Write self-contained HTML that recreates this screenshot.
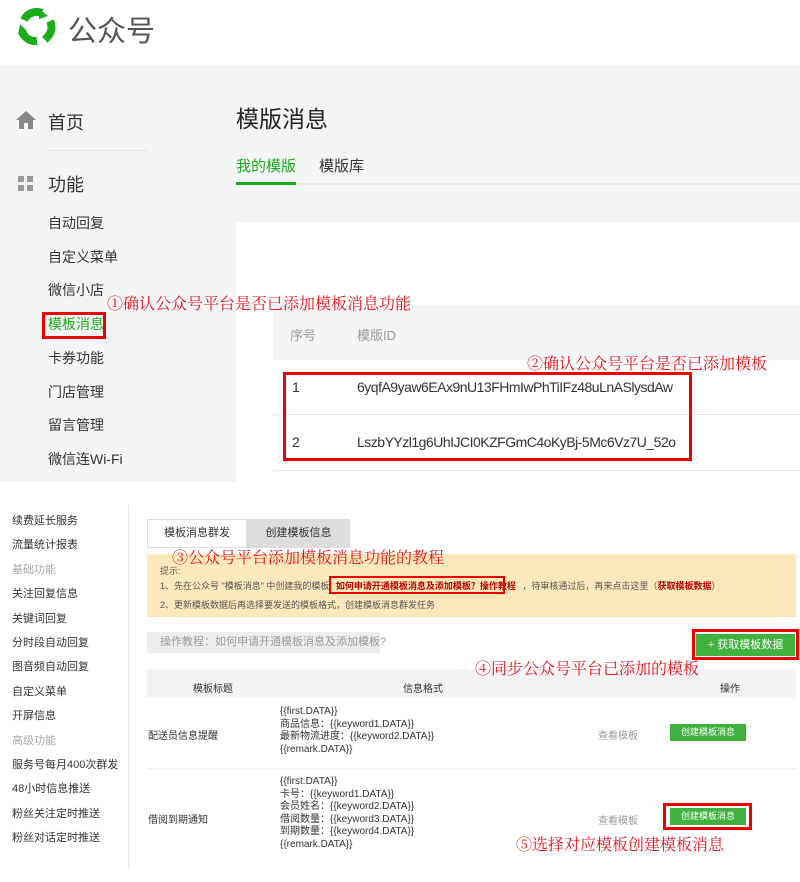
<!DOCTYPE html>
<html><head><meta charset="utf-8"><style>
*{margin:0;padding:0;box-sizing:border-box}
body{width:800px;height:882px;position:relative;overflow:hidden;background:#fff;font-family:"Liberation Sans","Noto Sans CJK SC",sans-serif;color:#333}
.a{position:absolute;white-space:nowrap}
.red{color:#e8141b;font-family:"Noto Serif CJK SC","Liberation Serif",serif;z-index:5}
.box{position:absolute;border:3px solid #e00;z-index:4}
.s{font-size:11px;color:#333}
</style></head><body>
<div class="a" style="left:0;top:0;width:800px;height:65px;background:#fff"></div>
<svg class="a" style="left:15px;top:7px" width="42" height="40" viewBox="0 0 42 40">
<g fill="none" stroke="#1aad19" stroke-width="8" stroke-linecap="butt">
<path d="M9 13 A14 14 0 0 1 27 6"/>
<path d="M35 14 A14 14 0 0 1 30 32"/>
<path d="M22 34 A14 14 0 0 1 7 24"/>
</g>
<path d="M24 2 L33 9 L24 12Z M37 24 L33 36 L27 30Z M3 28 L5 17 L12 24Z" fill="#1aad19"/>
</svg>
<div class="a" style="left:68px;top:8px;font-size:29px;color:#555">公众号</div>
<div class="a" style="left:0;top:65px;width:800px;height:417px;background:#f4f5f7"></div>
<svg class="a" style="left:16px;top:111px" width="20" height="18" viewBox="0 0 20 18"><path d="M10 0 L20 9 H17 V18 H12 V12 H8 V18 H3 V9 H0Z" fill="#888"/></svg>
<div class="a" style="left:48px;top:109px;font-size:18px">首页</div>
<div class="a" style="left:48px;top:150px;width:100px;height:1px;background:#e2e3e5"></div>
<div class="a" style="left:18px;top:176px;width:6px;height:6px;background:#999"></div>
<div class="a" style="left:27px;top:176px;width:6px;height:6px;background:#999"></div>
<div class="a" style="left:18px;top:185px;width:6px;height:6px;background:#999"></div>
<div class="a" style="left:27px;top:185px;width:6px;height:6px;background:#999"></div>
<div class="a" style="left:48px;top:171px;font-size:18px">功能</div>
<div class="a" style="left:48px;top:207px;font-size:14px;line-height:33.7px">自动回复<br>自定义菜单<br>微信小店<br><span style="color:#1aad19">模板消息</span><br>卡券功能<br>门店管理<br>留言管理<br>微信连Wi-Fi</div>
<div class="box" style="left:42px;top:312px;width:64px;height:27px"></div>
<div class="a" style="left:236px;top:100px;font-size:23px;color:#222">模版消息</div>
<div class="a" style="left:236px;top:155px;font-size:15px;color:#1aad19">我的模版</div>
<div class="a" style="left:319px;top:155px;font-size:15px">模版库</div>
<div class="a" style="left:236px;top:183px;width:564px;height:2px;background:#e7e7eb"></div>
<div class="a" style="left:236px;top:182px;width:60px;height:3px;background:#1aad19"></div>
<div class="a" style="left:236px;top:222px;width:564px;height:260px;background:#fff"></div>
<div class="a" style="left:273px;top:305px;width:527px;height:55px;background:#f4f5f7"></div>
<div class="a" style="left:290px;top:325px;font-size:13px;color:#999">序号</div>
<div class="a" style="left:357px;top:325px;font-size:13px;color:#999">模版ID</div>
<div class="a" style="left:273px;top:414px;width:527px;height:1px;background:#e7e7eb"></div>
<div class="a" style="left:273px;top:470px;width:527px;height:1px;background:#e7e7eb"></div>
<div class="a" style="left:292px;top:379px;font-size:14px">1</div>
<div class="a" style="left:357px;top:379px;font-size:14px;letter-spacing:-0.5px">6yqfA9yaw6EAx9nU13FHmIwPhTiIFz48uLnASlysdAw</div>
<div class="a" style="left:292px;top:434px;font-size:14px">2</div>
<div class="a" style="left:357px;top:434px;font-size:14px;letter-spacing:-0.5px">LszbYYzl1g6UhIJCI0KZFGmC4oKyBj-5Mc6Vz7U_52o</div>
<div class="box" style="left:283px;top:372px;width:409px;height:89px"></div>
<div class="a red" style="left:107px;top:291px;font-size:16px">①确认公众号平台是否已添加模板消息功能</div>
<div class="a red" style="left:527px;top:351px;font-size:16px">②确认公众号平台是否已添加模板</div>
<div class="a" style="left:128px;top:505px;width:1px;height:365px;background:#e7e7eb"></div>
<div class="a s" style="left:12px;top:509px;line-height:24.4px">续费延长服务<br>流量统计报表<br><span style="color:#aaa">基础功能</span><br>关注回复信息<br>关键词回复<br>分时段自动回复<br>图音频自动回复<br>自定义菜单<br>开屏信息<br><span style="color:#aaa">高级功能</span><br>服务号每月400次群发<br>48小时信息推送<br>粉丝关注定时推送<br>粉丝对话定时推送</div>
<div class="a" style="left:147px;top:519px;width:100px;height:29px;border:1px solid #ddd;font-size:11px;text-align:center;line-height:27px">模板消息群发</div>
<div class="a" style="left:247px;top:519px;width:103px;height:29px;background:#ddd;font-size:11px;text-align:center;line-height:29px">创建模板信息</div>
<div class="a" style="left:147px;top:554px;width:649px;height:63px;background:#fbe8bb"></div>
<div class="a red" style="left:172px;top:545px;font-size:16px">③公众号平台添加模板消息功能的教程</div>
<div class="a" style="left:160px;top:564px;font-size:9px;color:#666">提示:</div>
<div class="a" style="left:160px;top:579px;font-size:9px;color:#555">1、先在公众号 "模板消息" 中创建我的模板 <span style="color:#b00;font-weight:bold;padding:0 4px">如何申请开通模板消息及添加模板？操作教程</span> ，待审核通过后，再来点击这里（<span style="color:#b00;font-weight:bold">获取模板数据</span>）</div>
<div class="box" style="left:329px;top:576px;width:176px;height:18px;border-width:2px"></div>
<div class="a" style="left:160px;top:598px;font-size:9px;color:#555">2、更新模板数据后再选择要发送的模板格式，创建模板消息群发任务</div>
<div class="a" style="left:147px;top:632px;width:233px;height:21px;background:#eee;font-size:11px;color:#999;line-height:21px;padding-left:13px">操作教程：如何申请开通模板消息及添加模板?</div>
<div class="a" style="left:696px;top:634px;width:99px;height:22px;background:#3fb13f;color:#fff;font-size:11px;text-align:center;line-height:22px">+ 获取模板数据</div>
<div class="box" style="left:692px;top:629px;width:107px;height:31px"></div>
<div class="a" style="left:147px;top:669px;width:649px;height:28px;background:#f3f3f5"></div>
<div class="a red" style="left:475px;top:656px;font-size:16px">④同步公众号平台已添加的模板</div>
<div class="a s" style="left:193px;top:680px;font-size:10px">模板标题</div>
<div class="a s" style="left:403px;top:680px;font-size:10px">信息格式</div>
<div class="a s" style="left:720px;top:680px;font-size:10px">操作</div>
<div class="a s" style="left:280px;top:706px;font-size:10px;line-height:12.5px">{{first.DATA}}<br>商品信息：{{keyword1.DATA}}<br>最新物流进度：{{keyword2.DATA}}<br>{{remark.DATA}}</div>
<div class="a s" style="left:148px;top:727px;font-size:10px">配送员信息提醒</div>
<div class="a" style="left:598px;top:727px;font-size:10px;color:#999">查看模板</div>
<div class="a" style="left:670px;top:724px;width:76px;height:17px;background:#3fb13f;color:#fff;font-size:9px;text-align:center;line-height:17px">创建模板消息</div>
<div class="a" style="left:147px;top:768px;width:649px;height:1px;background:#eee"></div>
<div class="a s" style="left:280px;top:776px;font-size:10px;line-height:12.5px">{{first.DATA}}<br>卡号：{{keyword1.DATA}}<br>会员姓名：{{keyword2.DATA}}<br>借阅数量：{{keyword3.DATA}}<br>到期数量：{{keyword4.DATA}}<br>{{remark.DATA}}</div>
<div class="a s" style="left:148px;top:811px;font-size:10px">借阅到期通知</div>
<div class="a" style="left:598px;top:812px;font-size:10px;color:#999">查看模板</div>
<div class="a" style="left:670px;top:808px;width:76px;height:17px;background:#3fb13f;color:#fff;font-size:9px;text-align:center;line-height:17px">创建模板消息</div>
<div class="box" style="left:663px;top:803px;width:89px;height:27px"></div>
<div class="a red" style="left:516px;top:832px;font-size:16px">⑤选择对应模板创建模板消息</div>
</body></html>
